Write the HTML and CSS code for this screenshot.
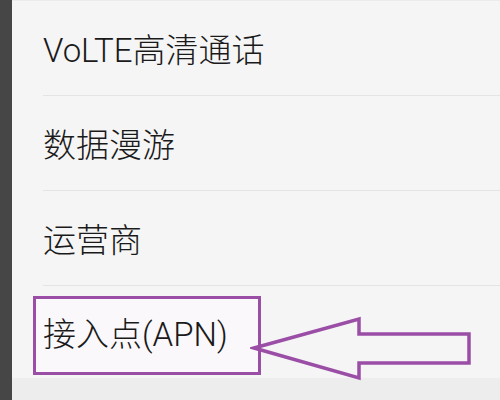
FILE: index.html
```html
<!doctype html>
<html lang="zh-CN">
    <head>
        <meta charset="UTF-8" />
        <meta name="viewport" content="width=device-width, initial-scale=1.0" />
        <title>移动网络</title>
        <link rel="stylesheet" href="styles.css">
    </head>

    <body>
        <div id="screen">
            <div class="edge"></div>
            <div id="main">
                <ul class="list">
                    <li class="item">VoLTE高清通话</li>
                    <li class="item">数据漫游</li>
                    <li class="item">运营商</li>
                    <li class="item last">接入点(APN)</li>
                </ul>
                <div class="footer"></div>
            </div>
            <!-- annotation drawn over the screenshot -->
            <div class="mark"></div>
            <svg class="arrow" width="230" height="70" viewBox="0 0 230 70">
                <polygon
                    points="4,37 109,8 109,23 219,23 219,52 109,52 109,67"
                    fill="none"
                    stroke="#9b4ea6"
                    stroke-width="3.5"
                    stroke-linejoin="miter"
                />
            </svg>
        </div>
    </body>
</html>
```

FILE: styles.css
```css
body {
    margin: 0;
    font-family: Roboto, "Noto Sans CJK SC", sans-serif;
    background: #f5f5f5;
}

#screen {
    position: relative;
    display: flex;
    width: 500px;
    height: 400px;
    overflow: hidden;
}

.edge {
    width: 12px;
    background: #464646;
}

#main {
    flex: 1;
    display: flex;
    flex-direction: column;
    border-top: solid 1px #ebebeb;
}

.list {
    position: relative;
    z-index: 1;
    margin: 0;
    padding: 0 0 0 31px;
    list-style: none;
}

.item {
    height: 94px;
    display: flex;
    align-items: center;
    font-size: 33px;
    font-weight: 300;
    color: #1a1a1a;
    border-bottom: solid 1px #e4e4e4;
}

.item.last {
    height: 92px;
    border-bottom: none;
}

.footer {
    flex: 1;
    background: #ededed;
}

.mark {
    position: absolute;
    left: 33px;
    top: 296px;
    width: 222px;
    height: 73px;
    border: solid 3.5px #9b4ea6;
    background: #fbf8fb;
}

.arrow {
    position: absolute;
    z-index: 2;
    left: 250px;
    top: 311px;
}
```
